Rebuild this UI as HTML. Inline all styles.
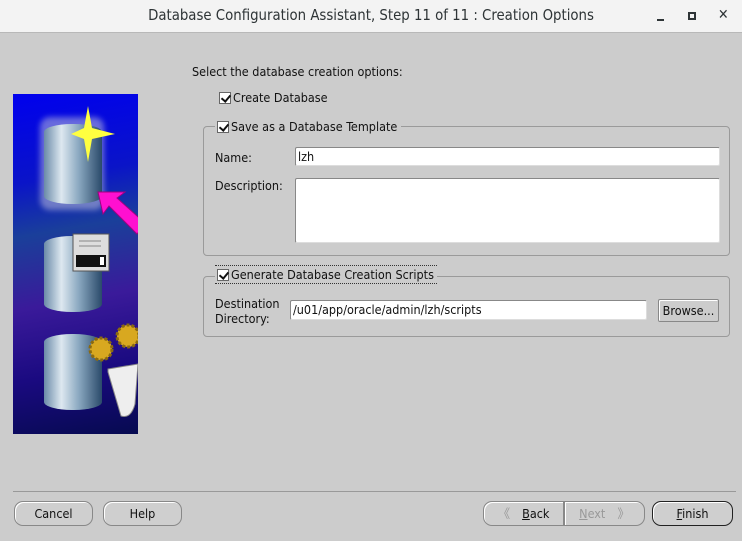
<!DOCTYPE html>
<html><head><meta charset="utf-8"><style>
*{box-sizing:border-box;margin:0;padding:0}
body{width:742px;height:541px;background:#cccccc;font-family:"DejaVu Sans Condensed","DejaVu Sans","Liberation Sans",sans-serif;font-size:12.5px;color:#111;position:relative;overflow:hidden}
.abs{position:absolute}
.title{left:0;top:0;width:742px;height:33px;background:#f3f3f3;border-bottom:1px solid #b8b8b8;}
.title .t{left:0;width:742px;top:7px;text-align:center;font-size:14.8px;color:#2e3436}
.cb{display:inline-block;width:12px;height:12px;border:1px solid #666;background:#fff;vertical-align:-2px;position:relative;margin-right:2px}
.cb:after{content:"";position:absolute;left:3px;top:0px;width:4px;height:7px;border:solid #111;border-width:0 2px 2px 0;transform:rotate(40deg)}
.grp{border:1px solid #9a9a9a;border-radius:4px}
.leg{background:#cccccc;padding:0 4px 0 2px}
.inp{background:#fff;border:1px solid #888;border-right-color:#ddd;border-bottom-color:#ddd;border-radius:2px;padding-left:2px}
.btn{border:1px solid #888;border-radius:9px;background:#cfcfcf;text-align:center;line-height:23px;height:25px;box-shadow:inset 1px 1px 0 #fff}
</style></head><body>
<div class="abs title"><div class="abs t">Database Configuration Assistant, Step 11 of 11 : Creation Options</div>
<div class="abs" style="left:657px;top:19px;width:7px;height:2px;background:#2e3436"></div>
<div class="abs" style="left:688px;top:12px;width:8px;height:8px;border:2px solid #2e3436"></div>
<div class="abs" style="left:718px;top:7px;font-size:14px;color:#2e3436;font-weight:bold">✕</div>
</div>

<div class="abs" style="left:13px;top:94px;width:125px;height:340px;background:linear-gradient(170deg,#0000ee 0%,#0a14c8 25%,#1a3f9a 40%,#3a1a9a 60%,#1a0a80 80%,#060a50 100%);overflow:hidden">
 <div class="abs" style="left:27px;top:23px;width:64px;height:93px;border-radius:10px;background:#ccd;opacity:.5;filter:blur(3px)"></div>
 <div class="abs" style="left:31px;top:30px;width:58px;height:80px;border-radius:28px/8px;background:linear-gradient(90deg,#6a8aa8,#dde8f0 30%,#8aa8c0 60%,#2a4a6a)"></div>
 <div class="abs" style="left:31px;top:142px;width:58px;height:76px;border-radius:28px/8px;background:linear-gradient(90deg,#6a8aa8,#dde8f0 30%,#8aa8c0 60%,#2a4a6a)"></div>
 <div class="abs" style="left:31px;top:240px;width:58px;height:76px;border-radius:28px/8px;background:linear-gradient(90deg,#6a8aa8,#dde8f0 30%,#8aa8c0 60%,#2a4a6a)"></div>
 <svg class="abs" style="left:0;top:0" width="125" height="340">
  <polygon points="75,12 79,34 102,40 79,45 75,68 71,45 58,40 71,34" fill="#ffff40"/>
  <polygon points="85,98 112,98 104,104 133,130 124,140 96,112 90,120" fill="#ff10d0" stroke="#a00080"/>
  <rect x="60" y="140" width="36" height="37" fill="#ddd" stroke="#555"/>
  <rect x="63" y="161" width="30" height="12" fill="#111"/><rect x="87" y="163" width="4" height="8" fill="#fff"/>
  <line x1="66" y1="147" x2="88" y2="147" stroke="#888"/><line x1="66" y1="152" x2="88" y2="152" stroke="#888"/>
  <circle cx="88" cy="255" r="11" fill="#d8a820" stroke="#8a6a10" stroke-width="3" stroke-dasharray="3 2"/>
  <circle cx="115" cy="242" r="11" fill="#d8a820" stroke="#8a6a10" stroke-width="3" stroke-dasharray="3 2"/>
  <path d="M95,275 L125,270 L122,310 Q118,325 108,322 L95,278Z" fill="#eee" stroke="#888"/>
 </svg>
</div>

<div class="abs" style="left:192px;top:64px">Select the database creation options:</div>
<div class="abs" style="left:219px;top:90px"><span class="cb"></span>Create Database</div>

<div class="abs grp" style="left:203px;top:126px;width:527px;height:130px"></div>
<div class="abs leg" style="left:215px;top:119px"><span class="cb"></span>Save as a Database Template</div>
<div class="abs" style="left:215px;top:150px">Name:</div>
<div class="abs inp" style="left:295px;top:147px;width:425px;height:19px;line-height:17px">lzh</div>
<div class="abs" style="left:215px;top:178px">Description:</div>
<div class="abs inp" style="left:295px;top:178px;width:425px;height:65px"></div>

<div class="abs grp" style="left:203px;top:276px;width:527px;height:61px"></div>
<div class="abs leg" style="left:215px;top:265px;border-top:1px dotted #333;border-bottom:1px dotted #333;line-height:17px;padding-right:3px"><span class="cb"></span>Generate Database Creation Scripts</div>
<div class="abs" style="left:215px;top:296px;line-height:15px">Destination<br>Directory:</div>
<div class="abs inp" style="left:290px;top:300px;width:357px;height:20px;line-height:18px">/u01/app/oracle/admin/lzh/scripts</div>
<div class="abs" style="left:658px;top:299px;width:61px;height:23px;border:1px solid #888;border-radius:2px;text-align:center;line-height:21px;box-shadow:inset 1px 1px 0 #fff">Browse...</div>

<div class="abs" style="left:13px;top:491px;width:723px;height:1px;background:#999"></div>
<div class="abs btn" style="left:14px;top:501px;width:79px">Cancel</div>
<div class="abs btn" style="left:103px;top:501px;width:79px">Help</div>
<div class="abs btn" style="left:483px;top:501px;width:81px;border-radius:9px 0 0 9px"><span style="color:#999;margin-right:12px">《</span><u>B</u>ack</div>
<div class="abs btn" style="left:564px;top:501px;width:81px;border-radius:0 9px 9px 0;color:#999"><u>N</u>ext<span style="margin-left:12px">》</span></div>
<div class="abs btn" style="left:652px;top:501px;width:81px;border:1.5px solid #222"><u>F</u>inish</div>
</body></html>
